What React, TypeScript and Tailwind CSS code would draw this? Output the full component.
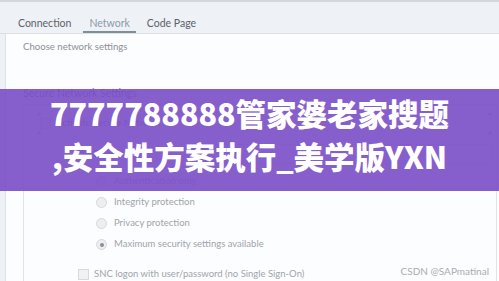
import type { ReactNode } from 'react'

const ui = { fontFamily: 'Lato, "Noto Sans", sans-serif' }

function Radio({ label, checked }: { label: string; checked?: boolean }) {
  return (
    <div className="flex h-[21px] items-center gap-[7px] pl-[72px]">
      <span className="flex h-[11px] w-[11px] items-center justify-center rounded-full border border-[#d6d9dd] bg-[#eceef1]">
        {checked && <span className="h-[4px] w-[4px] rounded-full bg-[#8a8e94]" />}
      </span>
      <span className="text-[9.5px] text-[#a0a4aa]">{label}</span>
    </div>
  )
}

function Box({ children }: { children?: ReactNode }) {
  return (
    <span className="flex h-[11px] w-[11px] items-center justify-center border border-[#d6d9dd] bg-[#f1f2f4]">
      {children}
    </span>
  )
}

export default function App() {
  return (
    <div className="relative h-[281px] w-[499px] overflow-hidden bg-[#eef1f5]" style={ui}>
      <div className="h-[2px] bg-[#d4d8de]" />
      <div className="flex h-[32px] items-stretch border-b border-[#dce0e5] pl-[18px] text-[10.5px] leading-[14px] text-[#5d6168]">
        <div className="pr-[12px] pt-[14px]">Connection</div>
        <div className="border-b-2 border-[#7d8f99] px-[6px] pt-[14px] text-[#8a9baa]">Network</div>
        <div className="pl-[11px] pt-[14px]">Code Page</div>
      </div>
      <div className="ml-[5px] h-[247px] border-l border-[#dde1e6] bg-[#fcfdff] pl-[17px] pt-[6px]">
        <div className="h-[13px] text-[9.6px] leading-[13px] text-[#8c9096]">Choose network settings</div>
        <div className="mt-[33px] h-[14px] text-[10.5px] leading-[14px] text-[#7a7e86]">
          Secure Network Settings
        </div>
        <div className="mr-[2px] mt-[4px] h-[200px] border border-b-0 border-[#e1e4e9] pt-[10px]">
          <div className="relative ml-[14px] mr-[5px] flex h-[17px] items-center gap-[5px] pl-[2px]">
            <span className="absolute left-0 top-[-2px] h-[3px] w-[3px] border-l border-t border-[#9aa0a8]" />
            <span className="absolute bottom-[-2px] left-0 h-[3px] w-[3px] border-b border-l border-[#9aa0a8]" />
            <span className="absolute right-0 top-[-2px] h-[3px] w-[3px] border-r border-t border-[#9aa0a8]" />
            <span className="absolute bottom-[-2px] right-0 h-[3px] w-[3px] border-b border-r border-[#9aa0a8]" />
            <Box />
            <span className="text-[9.5px] text-[#8c9096]">Activate Secure Network</span>
          </div>
          <div className="mr-[4px] mt-[12px] flex h-[20px] items-center">
            <span className="w-[179px] pl-[56px] text-[9.5px] text-[#8c9096]">SNC Name</span>
            <span className="h-full flex-1 border border-[#e1e4e9] bg-white" />
          </div>
          <div className="mt-[7px]">
            <Radio label="Authentication only" />
            <Radio label="Integrity protection" />
            <Radio label="Privacy protection" />
            <Radio label="Maximum security settings available" checked />
          </div>
          <div className="mt-[13px] flex h-[13px] items-center gap-[5px] pl-[54px]">
            <Box />
            <span className="text-[9.5px] text-[#a0a4aa]">
              SNC logon with user/password (no Single Sign-On)
            </span>
          </div>
        </div>
      </div>

      <span className="absolute right-[10px] top-[264px] text-[10px] text-[#a9acb1]">CSDN @SAPmatinal</span>

      <div className="absolute left-0 right-0 top-[89px] flex h-[102px] justify-center bg-[#7a4ec6]/90 pt-[3px]">
        <p
          className="text-center text-[30.5px] font-black leading-[43px] text-white"
          style={{ fontFamily: '"Noto Sans CJK SC", "Noto Sans", sans-serif' }}
        >
          7777788888管家婆老家搜题
          <br />
          ,安全性方案执行_美学版YXN
        </p>
      </div>
    </div>
  )
}
